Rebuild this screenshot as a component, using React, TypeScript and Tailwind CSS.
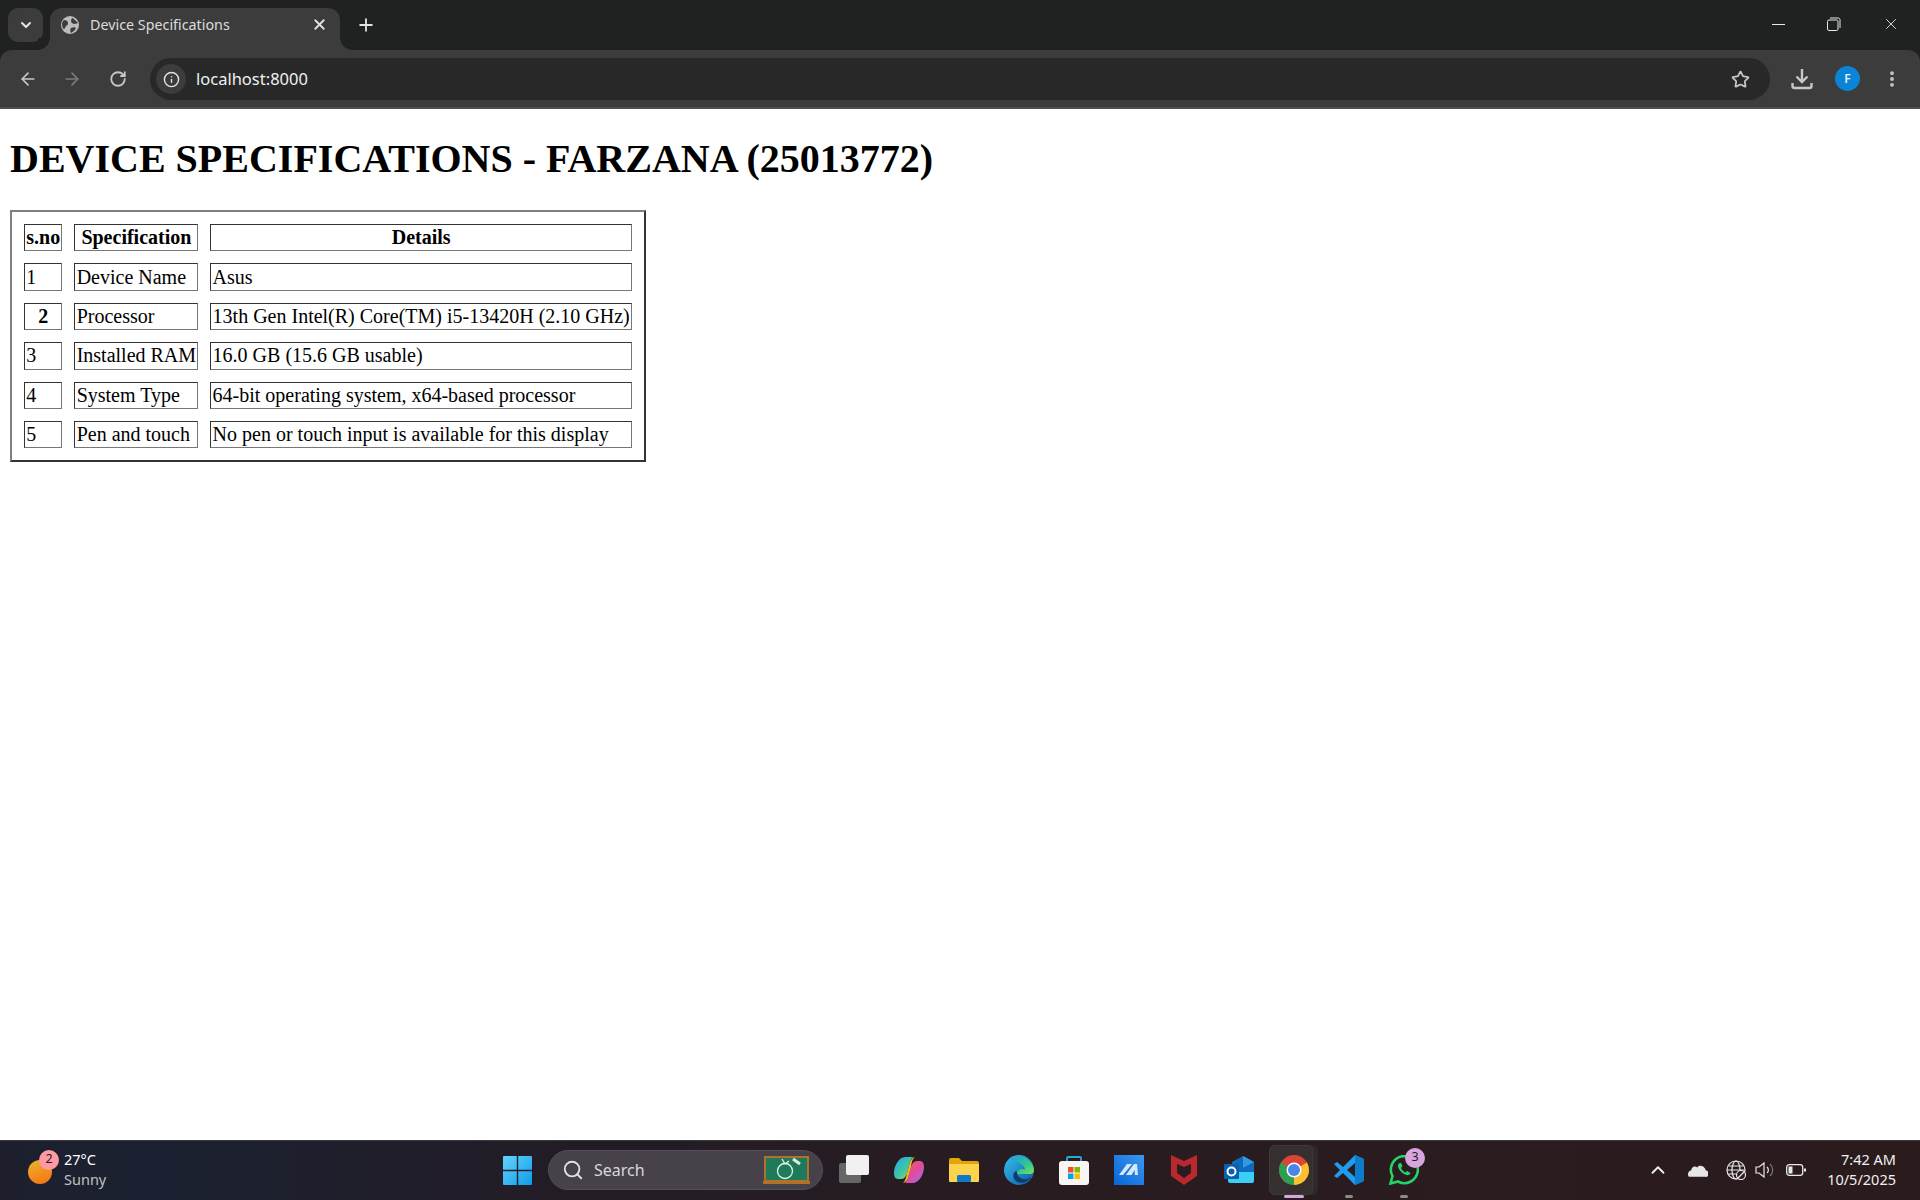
import { ArrowLeft, ArrowRight, ChevronDown, ChevronUp, EllipsisVertical, Info, Plus, RotateCw, Search, Star, X } from "lucide-react"

const rows = [
  ["1", "Device Name", "Asus"],
  ["2", "Processor", "13th Gen Intel(R) Core(TM) i5-13420H (2.10 GHz)"],
  ["3", "Installed RAM", "16.0 GB (15.6 GB usable)"],
  ["4", "System Type", "64-bit operating system, x64-based processor"],
  ["5", "Pen and touch", "No pen or touch input is available for this display"],
]

const cell = "border border-t-[#333] border-l-[#333] border-r-[#777] border-b-[#777] px-[1.25px] py-0 h-[27.4px] leading-[23px] whitespace-nowrap"

const ChromeBar = () => (
  <div className="h-[109px] shrink-0 bg-[#202222] flex flex-col font-['Noto_Sans',sans-serif] text-[#e3e3e3]">
    <div className="h-[50px] flex items-start relative">
      <div className="ml-2 mt-2 w-[35px] h-[34px] rounded-[10px] bg-[#3c3c3c] flex items-center justify-center">
        <ChevronDown size={16} strokeWidth={3} />
      </div>
      <div className="ml-[7px] mt-2 w-[290px] h-[42px] bg-[#3c3c3c] rounded-t-[12px] flex items-center pl-[11px] pr-[12px] pb-[9px] relative">
        <svg width="18" height="18" viewBox="0 0 18 18" className="shrink-0">
          <circle cx="9" cy="9" r="9" fill="#bdbdbd" />
          <path d="M3 4c2 0 4 1 4 3s-1 2-2 3-1 3-2 3-2-3-2-5 1-3 2-4zM12 2c1 2 4 3 5 5l-3 1c-2 0-4-1-4-3s1-3 2-3zM10 12c2-1 4-1 5 0-1 2-3 4-5 5-1-1-1-4 0-5z" fill="#3c3c3c" />
        </svg>
        <span className="ml-[11px] text-[14.3px] text-[#dcdcdc] flex-1">Device Specifications</span>
        <X size={17} strokeWidth={2.5} />
        <div className="absolute -left-[12px] bottom-0 w-3 h-3 bg-[radial-gradient(circle_at_0_0,#202222_11.5px,#3c3c3c_12px)]" />
        <div className="absolute -right-[12px] bottom-0 w-3 h-3 bg-[radial-gradient(circle_at_100%_0,#202222_11.5px,#3c3c3c_12px)]" />
      </div>
      <Plus size={20} strokeWidth={2.2} className="ml-4 mt-[15px]" />
      <div className="ml-auto flex items-center h-[48px] text-[#e8e8e8]">
        <div className="w-[56px] flex justify-center"><div className="w-[13px] h-px bg-[#e8e8e8]" /></div>
        <div className="w-[56px] flex justify-center">
          <svg width="14" height="14" viewBox="0 0 14 14" fill="none" stroke="currentColor">
            <rect x="0.5" y="3" width="10.5" height="10.5" rx="1.5" />
            <path d="M3 1h8.5a2 2 0 0 1 1.5 1.5V11" />
          </svg>
        </div>
        <div className="w-[58px] flex justify-center"><X size={18} strokeWidth={1.2} /></div>
      </div>
    </div>
    <div className="h-[57px] bg-[#3c3c3c] rounded-t-[12px] flex items-center text-[#c7c7c7]">
      <ArrowLeft size={20} strokeWidth={2} className="ml-[18px]" />
      <ArrowRight size={20} strokeWidth={2} className="ml-[24px] text-[#7b7b7b]" />
      <RotateCw size={18} strokeWidth={2.4} className="ml-[27px]" />
      <div className="ml-[23px] w-[1620px] h-[42px] rounded-full bg-[#282828] flex items-center pl-[6px] pr-[20px] mt-[1px]">
        <div className="w-[30px] h-[30px] rounded-full bg-[#3c3c3c] flex items-center justify-center">
          <Info size={17} strokeWidth={2} className="text-[#e3e3e3]" />
        </div>
        <span className="ml-[10px] text-[16.5px] text-[#f0f0f0] flex-1">localhost:8000</span>
        <Star size={19} strokeWidth={2.2} />
      </div>
      <svg width="22" height="22" viewBox="0 0 22 22" fill="none" stroke="currentColor" strokeWidth="2.400" className="ml-[21px]">
        <path d="M11 1v13M5.500 8.500L11 14l5.500-5.500" />
        <path d="M1.500 15v3a2 2 0 0 0 2 2h15a2 2 0 0 0 2-2v-3" />
      </svg>
      <div className="ml-[22px] w-[25px] h-[25px] rounded-full bg-[#0a84d6] text-[#e6f2fb] text-[12px] font-semibold flex items-center justify-center">F</div>
      <EllipsisVertical size={20} strokeWidth={2.6} className="ml-[22px]" />
    </div>
    <div className="h-[2px] bg-[#4e4e4e]" />
  </div>
)

const Page = () => (
  <div className="flex-1 bg-white text-black font-['Liberation_Serif',serif] px-[10px] pt-[27px]">
    <h1 className="text-[40px] font-bold leading-[46px] m-0">DEVICE SPECIFICATIONS - FARZANA (25013772)</h1>
    <table className="mt-[28px] border-separate border-spacing-[12px] border-2 border-t-[#808080] border-l-[#808080] border-r-[#333] border-b-[#333] text-[20px]">
      <thead>
        <tr>
          <th className={`${cell} text-center`}>s.no</th>
          <th className={`${cell} text-center`}>Specification</th>
          <th className={`${cell} text-center`}>Details</th>
        </tr>
      </thead>
      <tbody>
        {rows.map((row) => (
          <tr key={row[0]}>
            {row[0] === "2"
              ? <th className={`${cell} text-center`}>{row[0]}</th>
              : <td className={`${cell} text-left`}>{row[0]}</td>}
            <td className={cell}>{row[1]}</td>
            <td className={cell}>{row[2]}</td>
          </tr>
        ))}
      </tbody>
    </table>
  </div>
)

const AppIcon = ({ children, dot }: { children: React.ReactNode; dot?: string }) => (
  <div className="w-[30px] h-[30px] relative shrink-0">
    {children}
    {dot && <div className={`absolute top-[40px] left-[11px] w-2 h-[3px] rounded-full ${dot}`} />}
  </div>
)

const Taskbar = () => (
  <div className="h-[60px] shrink-0 border-t border-[#3a3a40] bg-[linear-gradient(90deg,#1d1f2d_0%,#1b2131_8%,#231c25_30%,#291c20_60%,#2a1b1d_100%)] flex items-center font-['Noto_Sans',sans-serif] relative">
    <div className="w-[503px] shrink-0 flex items-center pl-[28px]">
      <div className="relative w-[24px] h-[24px] rounded-full bg-[linear-gradient(160deg,#f0b429,#f37016)] mt-[2px]">
        <div className="absolute -top-[10px] left-[11px] w-[20px] h-[20px] rounded-full bg-[#ff99a4] text-[#1a1a1a] text-[12.5px] flex items-center justify-center">2</div>
      </div>
      <div className="ml-[12px] flex flex-col leading-[20px] mb-[4px]">
        <span className="text-[14.5px] text-white">27°C</span>
        <span className="text-[14.5px] text-[#c0c0c4]">Sunny</span>
      </div>
    </div>
    <svg width="29" height="29" viewBox="0 0 29 29" className="shrink-0 mb-[1px]">
      <defs>
        <linearGradient id="win" x1="0" y1="0" x2="1" y2="1">
          <stop offset="0" stopColor="#62d4ff" />
          <stop offset="1" stopColor="#0f9be8" />
        </linearGradient>
      </defs>
      <path d="M1 0h12.8v13.8H0V1a1 1 0 0 1 1-1zM15.2 0H28a1 1 0 0 1 1 1v12.8H15.2zM0 15.2h13.8V29H1a1 1 0 0 1-1-1zM15.2 15.2H29V28a1 1 0 0 1-1 1H15.2z" fill="url(#win)" />
    </svg>
    <div className="ml-[16px] w-[275px] h-[40px] rounded-full bg-[#47424a] border border-[#544f56] flex items-center pl-[13px] pr-[12px] shrink-0 mb-[1px]">
      <Search size={22} strokeWidth={2} className="text-[#e2e2e2]" />
      <span className="ml-[10px] text-[16px] text-[#d8d8d8] flex-1">Search</span>
      <svg width="47" height="28" viewBox="0 0 47 28">
        <rect x="2" y="1" width="43" height="24" fill="#1f7a5c" stroke="#b0722a" strokeWidth="2" />
        <rect x="0" y="25" width="47" height="3" fill="#b0722a" />
        <circle cx="22" cy="15" r="7.5" fill="none" stroke="#dff5e6" strokeWidth="1.3" />
        <path d="M22 8l-3-5M22 8l4-3" stroke="#dff5e6" strokeWidth="1.3" fill="none" />
        <path d="M30 3l7 5" stroke="#e6e6e6" strokeWidth="3" />
      </svg>
    </div>
    <div className="ml-[16px] flex items-center gap-[25px] mb-[2px]">
      <AppIcon>
        <div className="absolute left-0 top-[8px] w-[22px] h-[20px] bg-[#666] rounded-[2px]" />
        <div className="absolute left-[7px] top-0 w-[23px] h-[20px] bg-[#f1f1f1] rounded-[2px]" />
      </AppIcon>
      <AppIcon>
        <svg viewBox="0 0 30 30" width="30" height="30">
          <defs>
            <linearGradient id="cop1" x1="0" y1="0" x2="1" y2="1">
              <stop offset="0" stopColor="#2aa3f0" />
              <stop offset="0.55" stopColor="#3dc9a0" />
              <stop offset="1" stopColor="#f4d03f" />
            </linearGradient>
            <linearGradient id="cop2" x1="0" y1="0" x2="1" y2="1">
              <stop offset="0" stopColor="#f2683a" />
              <stop offset="0.5" stopColor="#e24a9a" />
              <stop offset="1" stopColor="#a86af0" />
            </linearGradient>
          </defs>
          <path d="M11 2h10c-3 0-4 2-5 5l-3 11c-1 4-3 6-6 6H4c-3 0-4-3-4-6 0-7 5-16 11-16z" fill="url(#cop1)" />
          <path d="M19 28H9c3 0 4-2 5-5l3-11c1-4 3-6 6-6h3c3 0 4 3 4 6 0 7-5 16-11 16z" fill="url(#cop2)" />
          <path d="M13 18l3-11c.7-2 2-4 5-5-2 2-3 3-4 10l-3 11c-.6 2-2 4-5 5 2-2 3-5 4-10z" fill="#f5b52e" />
        </svg>
      </AppIcon>
      <AppIcon>
        <svg viewBox="0 0 30 30" width="30" height="30">
          <path d="M0 5a2 2 0 0 1 2-2h8l3 3h15a2 2 0 0 1 2 2v18H0z" fill="#e5a50a" />
          <path d="M0 9h30v17a1 1 0 0 1-1 1H1a1 1 0 0 1-1-1z" fill="#fcd34d" />
          <rect x="8" y="20" width="14" height="7" rx="1.5" fill="#0f78c8" />
        </svg>
      </AppIcon>
      <AppIcon>
        <svg viewBox="0 0 30 30" width="30" height="30">
          <defs>
            <linearGradient id="edge" x1="0" y1="0" x2="1" y2="1">
              <stop offset="0" stopColor="#35c1f1" />
              <stop offset="1" stopColor="#0c59a4" />
            </linearGradient>
            <linearGradient id="edge2" x1="0" y1="0" x2="1" y2="1">
              <stop offset="0" stopColor="#1b9de2" />
              <stop offset="0.6" stopColor="#35c98a" />
              <stop offset="1" stopColor="#7ee05c" />
            </linearGradient>
          </defs>
          <circle cx="15" cy="15" r="15" fill="url(#edge)" />
          <path d="M6 5C10 0 24-1 29 11c2 5 1 8-3 8H13c0-5 6-6 8-4 0-5-8-10-15-10z" fill="url(#edge2)" />
          <path d="M13 17c0 5 5 8 10 7l4-2c-3 5-9 7-13 5-3-1-6-5-4-9 1-2 3-2 3-1z" fill="#123a70" />
        </svg>
      </AppIcon>
      <AppIcon>
        <svg viewBox="0 0 30 30" width="30" height="30">
          <path d="M8 7V3a1 1 0 0 1 1-1h12a1 1 0 0 1 1 1v4" fill="none" stroke="#2aa8e0" strokeWidth="1.8" />
          <rect x="0" y="6" width="30" height="24" rx="3" fill="#f8f6f2" />
          <rect x="9" y="12" width="5.5" height="5.5" fill="#f25022" />
          <rect x="15.5" y="12" width="5.5" height="5.5" fill="#7fba00" />
          <rect x="9" y="18.5" width="5.5" height="5.5" fill="#00a4ef" />
          <rect x="15.5" y="18.5" width="5.5" height="5.5" fill="#ffb900" />
        </svg>
      </AppIcon>
      <AppIcon>
        <svg viewBox="0 0 30 30" width="30" height="30">
          <defs>
            <linearGradient id="ms" x1="0" y1="1" x2="1" y2="0">
              <stop offset="0" stopColor="#0466d8" />
              <stop offset="1" stopColor="#3d97f0" />
            </linearGradient>
          </defs>
          <rect width="30" height="30" fill="url(#ms)" />
          <path d="M5 20l8-11h5L9 20zM12 20l8-11h3l1 11h-3l-.5-5-3 5z" fill="#d7e8fb" />
        </svg>
      </AppIcon>
      <AppIcon>
        <svg viewBox="0 0 30 30" width="30" height="30">
          <path d="M2 0l13 6 13-6v21l-13 9-13-9z" fill="#b8282e" />
          <path d="M8 9l7 3 7-3v9l-7 5-7-5z" fill="#2a1b1f" />
        </svg>
      </AppIcon>
      <AppIcon>
        <svg viewBox="0 0 30 30" width="30" height="30">
          <path d="M8 7l11-6 11 6v14H8z" fill="#0f6cbd" />
          <path d="M19 1l11 6-11 6z" fill="#2f9be0" />
          <path d="M4 17h26v9a2 2 0 0 1-2 2H6a2 2 0 0 1-2-2z" fill="#3ad0f5" />
          <rect x="0" y="9" width="15" height="15" rx="1" fill="#0a5fb0" />
          <circle cx="7.5" cy="16.5" r="4" fill="none" stroke="#fff" strokeWidth="2" />
        </svg>
      </AppIcon>
      <div className="relative w-[30px] h-[30px] shrink-0">
        <div className="absolute -left-[10px] -top-[10px] w-[49px] h-[50px] rounded-[6px] bg-[#2f2929]" />
        <div className="absolute -left-[10px] -top-[10px] w-[44px] h-[50px] rounded-[6px] bg-[#352f2f] border border-[#3e3838]" />
        <svg viewBox="0 0 30 30" width="30" height="30" className="absolute left-0 top-0">
          <circle cx="15" cy="15" r="15" fill="#db4437" />
          <path d="M15 15L27.99 7.5A15 15 0 0 1 15 30z" fill="#fbc02d" />
          <path d="M15 15L15 30A15 15 0 0 1 2.01 7.5z" fill="#2e9e4f" />
          <circle cx="15" cy="15" r="7.5" fill="#fff" />
          <circle cx="15" cy="15" r="6" fill="#4a86e8" />
        </svg>
        <div className="absolute top-[40px] left-[5px] w-5 h-[3px] rounded-full bg-[#d9a5e0]" />
      </div>
      <AppIcon dot="bg-[#8f8a8a]">
        <svg viewBox="0 0 30 30" width="30" height="30">
          <path d="M21 0l9 4v22l-9 4L9 18l-6 5-3-2 6-6-6-6 3-2 6 5z" fill="#1f9cf0" />
          <path d="M21 0l9 4v22l-9 4z" fill="#0e7ccc" />
          <path d="M21 8l-8 7 8 7z" fill="#2a1c20" />
        </svg>
      </AppIcon>
      <AppIcon dot="bg-[#8f8a8a]">
        <svg viewBox="0 0 30 30" width="30" height="30">
          <path d="M1.5 28.5l2-7.5A13.5 13.5 0 1 1 9 26.500z" fill="none" stroke="#25d366" strokeWidth="2.6" />
          <path d="M10.500 8c-1.500 1-2 3-1 5 1.500 3.500 4.500 6 8 7 2 .5 3.500-.5 4-2l-3.500-2-1.500 1.500c-2-1-3.500-2.500-4.500-4.500L13.500 11 12 8z" fill="#25d366" />
        </svg>
        <div className="absolute -top-[7px] left-[16px] w-[20px] h-[20px] rounded-full bg-[#d9a5e0] text-[#222] text-[12.5px] flex items-center justify-center">3</div>
      </AppIcon>
    </div>
    <div className="ml-auto flex items-center pr-[24px] text-[#f0f0f0] mb-[1px]">
      <ChevronUp size={22} strokeWidth={2} />
      <svg width="21" height="14" viewBox="0 0 20 13" className="ml-[18px]">
        <path d="M2 13h15a3 3 0 0 0 1-6c-1-4-6-6-8-3-3-2-6 0-6 3-3 0-4 5-2 6z" fill="#e6e6e6" />
      </svg>
      <svg width="20" height="20" viewBox="0 0 20 20" fill="none" stroke="#e8e8e8" strokeWidth="1.2" className="ml-[18px]">
        <circle cx="10" cy="10" r="9" />
        <ellipse cx="10" cy="10" rx="4" ry="9" />
        <path d="M1 10h18M2.500 6h15M2.500 14h15" />
        <circle cx="15" cy="15" r="4.500" fill="#2a1c20" />
        <path d="M12 18l6-6" />
      </svg>
      <svg width="20" height="20" viewBox="0 0 20 20" fill="none" stroke="#e8e8e8" strokeWidth="1.2" className="ml-[9px]">
        <path d="M1 7h3l5-4v14l-5-4H1z" />
        <path d="M12 7a4 4 0 0 1 0 6" />
        <path d="M15 4a8 8 0 0 1 0 12" stroke="#777" />
      </svg>
      <svg width="20" height="12" viewBox="0 0 20 12" fill="none" stroke="#e8e8e8" strokeWidth="1.3" className="ml-[11px]">
        <rect x="0.700" y="0.700" width="16" height="10.600" rx="2.500" />
        <rect x="2.500" y="2.500" width="4" height="7" fill="#e8e8e8" stroke="none" />
        <path d="M19 4.500v3" strokeWidth="2" />
      </svg>
      <div className="ml-[20px] flex flex-col items-end text-[14.5px] leading-[20px] w-[70px] mb-[3px]">
        <span>7:42 AM</span>
        <span>10/5/2025</span>
      </div>
    </div>
  </div>
)

const App = () => {
  return (
    <div className="h-screen flex flex-col overflow-hidden">
      <ChromeBar />
      <Page />
      <Taskbar />
    </div>
  )
}

export default App
